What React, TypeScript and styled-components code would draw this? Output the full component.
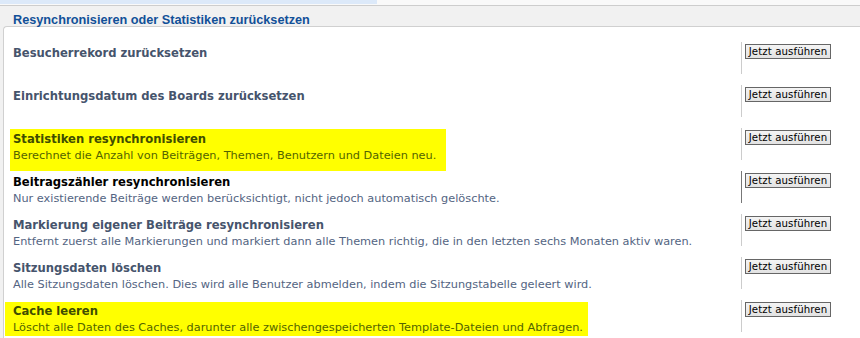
import React from 'react';
import styled, { createGlobalStyle } from 'styled-components';

const GlobalStyle = createGlobalStyle`
  html, body {
    margin: 0;
    padding: 0;
    background: #ffffff;
  }
  body {
    font-family: "DejaVu Sans", Verdana, sans-serif;
    width: 860px;
    height: 338px;
    overflow: hidden;
  }
`;

const TopStrip = styled.div`
  height: 5px;
  background: #f9f9f9;
  display: flex;
`;

const TopTab = styled.div`
  width: 377px;
  height: 4px;
  background: #dce9f9;
`;

const Section = styled.div`
  background: #f1f1f1;
  border-top: 1px solid #cdcdcd;
  padding-left: 3px;
`;

const Legend = styled.h2`
  margin: 0;
  height: 20px;
  padding-left: 10px;
  font-family: "Liberation Sans", Arial, sans-serif;
  font-size: 12.7px;
  font-weight: bold;
  line-height: 20px;
  color: #115098;
  position: relative;
  top: 4px;
  z-index: 1;
`;

const Panel = styled.div`
  background: #ffffff;
  border-top: 1px solid #d0d0d0;
  border-left: 1px solid #d0d0d0;
  border-top-left-radius: 4px;
  padding-top: 15px;
  height: 300px;
`;

const Row = styled.div`
  display: flex;
  height: 43px;
`;

const Term = styled.div<{ $top: number }>`
  flex: 1;
  padding-left: 9px;
  padding-top: ${p => p.$top}px;
`;

const Mark = styled.div<{ $on?: boolean; $pad?: string; $shift?: number }>`
  display: inline-block;
  padding: ${p => (p.$on ? p.$pad : '0')};
  margin-left: ${p => (p.$on ? p.$shift : 0)}px;
  background: ${p => (p.$on ? '#ffff00' : 'transparent')};
`;

const Title = styled.div<{ $on?: boolean; $hot?: boolean }>`
  font-size: 11.6px;
  font-weight: bold;
  line-height: 17px;
  color: ${p => (p.$on ? '#3f4d00' : p.$hot ? '#000000' : '#46546c')};
`;

const Desc = styled.div<{ $on?: boolean }>`
  font-size: 11.3px;
  line-height: 16px;
  color: ${p => (p.$on ? '#536400' : '#536482')};
`;

const Action = styled.div<{ $hot?: boolean }>`
  width: 119px;
  height: 32px;
  border-left: 1px solid ${p => (p.$hot ? '#777777' : '#cccccc')};
  padding: 2px 0 0 3px;
  box-sizing: border-box;
`;

const RunButton = styled.button`
  display: block;
  width: 86px;
  height: 15px;
  padding: 0;
  border: 1px solid #666666;
  background: linear-gradient(#f4f4f4, #e2e2e2);
  font-family: "DejaVu Sans", Verdana, sans-serif;
  font-size: 10.2px;
  line-height: 12px;
  letter-spacing: 0.1px;
  text-align: center;
  color: #000000;
  cursor: pointer;
`;

type Item = {
  title: string;
  desc?: string;
  marked?: boolean;
  top?: number;
  pad?: string;
  shift?: number;
  hot?: boolean;
};

const items: Item[] = [
  { title: 'Besucherrekord zurücksetzen' },
  { title: 'Einrichtungsdatum des Boards zurücksetzen' },
  {
    title: 'Statistiken resynchronisieren',
    desc: 'Berechnet die Anzahl von Beiträgen, Themen, Benutzern und Dateien neu.',
    marked: true,
    top: 1,
    pad: '2px 10px 7px 3px',
    shift: -3,
  },
  {
    title: 'Beitragszähler resynchronisieren',
    desc: 'Nur existierende Beiträge werden berücksichtigt, nicht jedoch automatisch gelöschte.',
    hot: true,
  },
  {
    title: 'Markierung eigener Beiträge resynchronisieren',
    desc: 'Entfernt zuerst alle Markierungen und markiert dann alle Themen richtig, die in den letzten sechs Monaten aktiv waren.',
  },
  {
    title: 'Sitzungsdaten löschen',
    desc: 'Alle Sitzungsdaten löschen. Dies wird alle Benutzer abmelden, indem die Sitzungstabelle geleert wird.',
  },
  {
    title: 'Cache leeren',
    desc: 'Löscht alle Daten des Caches, darunter alle zwischengespeicherten Template-Dateien und Abfragen.',
    marked: true,
    top: 2,
    pad: '1px 5px 0 8px',
    shift: -8,
  },
];

export default function App() {
  return (
    <>
      <GlobalStyle />
      <TopStrip>
        <TopTab />
      </TopStrip>
      <Section>
        <Legend>Resynchronisieren oder Statistiken zurücksetzen</Legend>
        <Panel>
          {items.map(item => (
            <Row key={item.title}>
              <Term $top={item.top ?? (item.desc ? 3 : 0)}>
                <Mark $on={item.marked} $pad={item.pad} $shift={item.shift}>
                  <Title $on={item.marked} $hot={item.hot}>{item.title}</Title>
                  {item.desc && <Desc $on={item.marked}>{item.desc}</Desc>}
                </Mark>
              </Term>
              <Action $hot={item.hot}>
                <RunButton type="button">Jetzt ausführen</RunButton>
              </Action>
            </Row>
          ))}
        </Panel>
      </Section>
    </>
  );
}
